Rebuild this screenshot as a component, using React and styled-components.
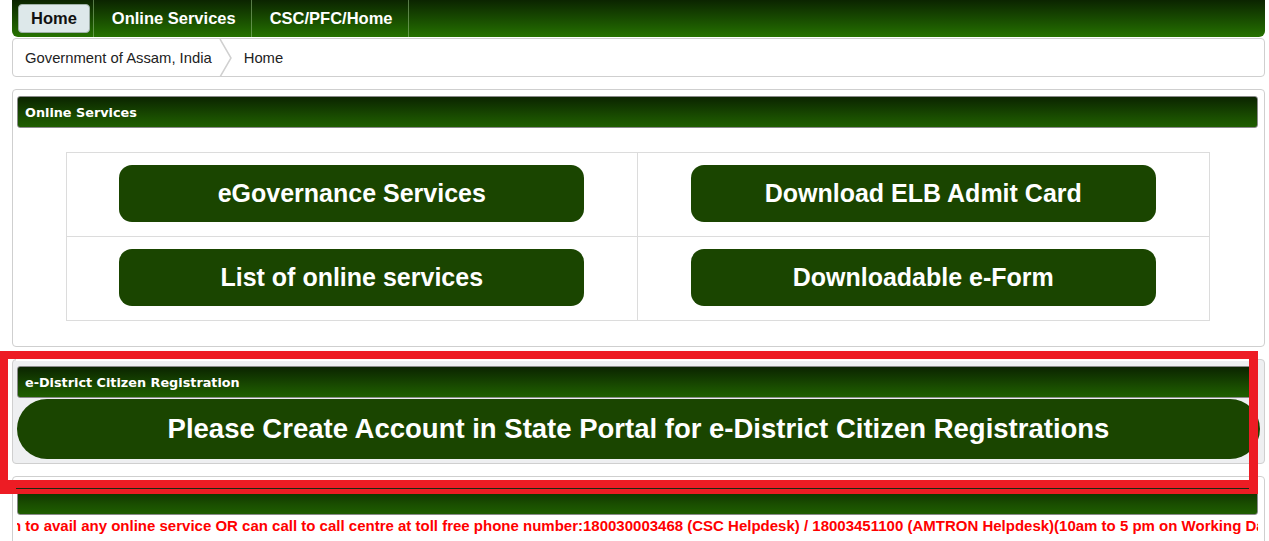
import styled, { createGlobalStyle } from "styled-components"

const GlobalStyle = createGlobalStyle`
    body {
        margin: 0;
        background: #fff;
        font-family: "Liberation Sans", Arial, sans-serif;
    }
`

const navItems = ["Home", "Online Services", "CSC/PFC/Home"]

const services = [
    "eGovernance Services",
    "Download ELB Admit Card",
    "List of online services",
    "Downloadable e-Form",
]

export default function App() {
    return (
        <Page>
            <GlobalStyle />
            <Nav>
                {navItems.map((item, i) => (
                    <NavItem key={item} $active={i === 0}>
                        <span>{item}</span>
                    </NavItem>
                ))}
            </Nav>
            <Breadcrumb>
                <span>Government of Assam, India</span>
                <Chevron viewBox="0 0 14 38" width="14" height="38">
                    <polyline points="1,0 12,19 1,38" fill="none" stroke="#d0d0d0" strokeWidth="1.5" />
                </Chevron>
                <span>Home</span>
            </Breadcrumb>

            <Panel>
                <PanelHeader>Online Services</PanelHeader>
                <ServiceGrid>
                    {services.map((s) => (
                        <ServiceCell key={s}>
                            <ServiceButton>{s}</ServiceButton>
                        </ServiceCell>
                    ))}
                </ServiceGrid>
            </Panel>

            <Panel $grey>
                <PanelHeader>e-District Citizen Registration</PanelHeader>
                <WideButton>Please Create Account in State Portal for e-District Citizen Registrations</WideButton>
            </Panel>

            <Panel>
                <PanelHeader />
                <Notice>
                    <span>n to avail any online service OR can call to call centre at toll free phone number:180030003468 (CSC Helpdesk) / 18003451100 (AMTRON Helpdesk)(10am to 5 pm on Working Days)</span>
                </Notice>
            </Panel>

            <Highlight>
                <TopLine />
                <BottomLine />
            </Highlight>
        </Page>
    )
}

const Page = styled.div`
    position: relative;
    width: 1253px;
    margin-left: 12px;
    padding-bottom: 40px;
`

const Nav = styled.div`
    display: flex;
    align-items: center;
    height: 37px;
    border-radius: 0 0 6px 6px;
    background: linear-gradient(#0b2400, #1d5a00 70%, #267200);
`

const NavItem = styled.div`
    display: flex;
    align-items: center;
    height: 37px;
    padding: ${(p) => (p.$active ? "0 3px 0 6px" : "0 15px 0 18px")};
    border-right: 1px solid rgba(150, 190, 130, 0.55);
    font-size: 16.5px;
    font-weight: bold;
    color: #fff;

    span {
        display: inline-flex;
        align-items: center;
        ${(p) => p.$active && `
            height: 27px;
            padding: 0 12px 0 12px;
            background: #dde8ea;
            border: 1px solid #9fb0a8;
            border-radius: 4px;
            color: #111;
        `}
    }
`

const Breadcrumb = styled.div`
    display: flex;
    align-items: center;
    height: 37px;
    margin-top: 1px;
    padding-left: 12px;
    border: 1px solid #cfcfcf;
    border-radius: 4px;
    font-size: 14.8px;
    color: #222;
`

const Chevron = styled.svg`
    margin: 0 11px 0 7px;
`

const Panel = styled.div`
    margin-top: 12px;
    padding: 6px 6px 0 4px;
    border: 1px solid #cfcfcf;
    border-radius: 4px;
    background: ${(p) => (p.$grey ? "#eeeff1" : "#fff")};
    padding-bottom: ${(p) => (p.$grey ? "4px" : "0")};
`

const PanelHeader = styled.div`
    display: flex;
    align-items: center;
    height: 30px;
    padding-left: 7px;
    border: 1px solid #8a8a8a;
    border-radius: 3px;
    background: linear-gradient(#0b2400, #1a4f00 70%, #1f5e00);
    font-family: "DejaVu Sans", Verdana, sans-serif;
    font-size: 12.8px;
    font-weight: bold;
    color: #fff;
`

const ServiceGrid = styled.div`
    display: grid;
    grid-template-columns: 1fr 1fr;
    width: 1143px;
    margin: 24px auto 25px;
    border-top: 1px solid #dcdcdc;
    border-left: 1px solid #dcdcdc;
`

const ServiceCell = styled.div`
    display: flex;
    justify-content: center;
    padding: 12px 0 14px;
    border-right: 1px solid #dcdcdc;
    border-bottom: 1px solid #dcdcdc;
`

const ServiceButton = styled.div`
    display: flex;
    align-items: center;
    justify-content: center;
    width: 465px;
    height: 57px;
    border-radius: 13px;
    background: #1a4500;
    font-size: 25px;
    font-weight: bold;
    color: #fff;
`

const WideButton = styled.div`
    display: flex;
    align-items: center;
    justify-content: center;
    width: calc(100% + 2px);
    height: 60px;
    margin-top: 1px;
    border-radius: 30px;
    background: #1a4500;
    font-size: 27.5px;
    font-weight: bold;
    color: #fff;
`

const Notice = styled.div`
    overflow: hidden;
    white-space: nowrap;
    margin: 2px 0 0 0;
    padding-bottom: 20px;
    font-size: 15px;
    font-weight: bold;
    color: #f00;

    span {
        display: inline-block;
        margin-left: -5px;
    }
`

const Highlight = styled.div`
    position: absolute;
    left: -12px;
    top: 351px;
    width: 1241px;
    height: 121px;
    border: 8px solid #ed1c24;
    border-right-width: 9px;
    border-bottom-width: 14px;
`

const TopLine = styled.div`
    position: absolute;
    left: 8px;
    right: 0;
    top: 0;
    height: 2px;
    background: #fff;
`

const BottomLine = styled.div`
    position: absolute;
    left: 8px;
    right: 0;
    bottom: -9px;
    height: 1px;
    background: #1a2a10;
`
